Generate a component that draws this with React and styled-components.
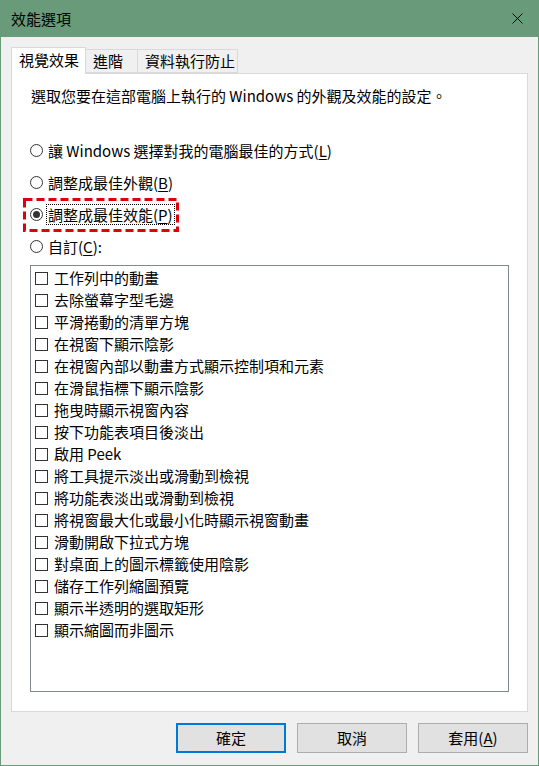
import React from 'react';
import styled, { createGlobalStyle } from 'styled-components';

const GREEN = '#699a79';
const FONT = `"Noto Sans CJK TC", "Noto Sans", sans-serif`;

const Global = createGlobalStyle`
  html, body {
    margin: 0;
    padding: 0;
    background: #ffffff;
    overflow: hidden;
  }
  * {
    box-sizing: border-box;
  }
`;

const Window = styled.div`
  width: 539px;
  height: 766px;
  display: flex;
  flex-direction: column;
  background: #f0f0f0;
  border: 1px solid ${GREEN};
  border-top: none;
  font-family: ${FONT};
  font-size: 15px;
  color: #000;
`;

const TitleBar = styled.div`
  height: 37px;
  flex: none;
  display: flex;
  align-items: center;
  justify-content: space-between;
  background: ${GREEN};
  padding: 0 15px 0 10px;
  line-height: 20px;
`;

const CloseIcon = () => (
  <svg width="11" height="11" viewBox="0 0 11 11">
    <path d="M0.5 0.5 L10.5 10.5 M10.5 0.5 L0.5 10.5" stroke="#000" strokeWidth="1" fill="none" />
  </svg>
);

const Body = styled.div`
  flex: 1;
  display: flex;
  flex-direction: column;
  padding: 10px 10px 0 10px;
`;

const TabStrip = styled.div`
  display: flex;
  align-items: flex-end;
  height: 26px;
  position: relative;
  z-index: 1;
`;

const Tab = styled.div`
  width: ${p => p.$w}px;
  height: ${p => (p.$active ? 27 : 24)}px;
  margin-bottom: ${p => (p.$active ? -1 : 0)}px;
  margin-left: ${p => (p.$first ? 0 : -1)}px;
  padding-left: 7px;
  border: 1px solid #d9d9d9;
  border-bottom: ${p => (p.$active ? 'none' : '1px solid #d9d9d9')};
  background: ${p => (p.$active ? '#ffffff' : '#f0f0f0')};
  line-height: ${p => (p.$active ? 24 : 22)}px;
  white-space: nowrap;
`;

const Panel = styled.div`
  height: 639px;
  flex: none;
  background: #ffffff;
  border: 1px solid #d9d9d9;
  padding: 12px 19px 0 19px;
  display: flex;
  flex-direction: column;
`;

const Description = styled.div`
  line-height: 20px;
  white-space: nowrap;
`;

const RadioGroup = styled.div`
  display: flex;
  flex-direction: column;
  gap: 12px;
  margin-top: 34px;
  margin-left: -1px;
`;

const RadioRow = styled.div`
  position: relative;
  display: flex;
  align-items: center;
  height: 20px;
  white-space: nowrap;
`;

const RadioCircle = styled.span`
  width: 13px;
  height: 13px;
  flex: none;
  border-radius: 50%;
  border: 1px solid #333;
  background: #fff;
  display: flex;
  align-items: center;
  justify-content: center;
  margin-right: ${p => (p.$focused ? 3 : 5)}px;

  &::after {
    content: '';
    display: ${p => (p.$checked ? 'block' : 'none')};
    width: 7px;
    height: 7px;
    border-radius: 50%;
    background: #333;
  }
`;

const RadioLabel = styled.span`
  line-height: 19px;
  padding: 0 1px;
  border: 1px dotted ${p => (p.$focused ? '#000' : 'transparent')};
  ${p => !p.$focused && 'border: none; padding: 0;'}
`;

const Highlight = styled.svg`
  position: absolute;
  left: -7px;
  top: -6px;
  overflow: visible;
  pointer-events: none;
`;

const ListBox = styled.div`
  width: 479px;
  height: 427px;
  margin-top: 9px;
  margin-left: -1px;
  border: 1px solid #828790;
  background: #fff;
  padding: 1px 0 0 4px;
`;

const CheckRow = styled.div`
  display: flex;
  align-items: center;
  height: 22px;
  line-height: 20px;
  white-space: nowrap;
`;

const CheckBox = styled.span`
  width: 13px;
  height: 13px;
  flex: none;
  border: 1px solid #333;
  background: #fff;
  margin-right: 6px;
`;

const Footer = styled.div`
  display: flex;
  justify-content: flex-end;
  gap: 11px;
  margin-top: 11px;
`;

const Button = styled.div`
  width: 110px;
  height: 30px;
  display: flex;
  align-items: center;
  justify-content: center;
  background: #e1e1e1;
  border: ${p => (p.$default ? '2px solid #0078d7' : '1px solid #adadad')};
  line-height: 20px;
`;

const Key = styled.u`
  text-underline-offset: 2px;
`;

const effects = [
  '工作列中的動畫',
  '去除螢幕字型毛邊',
  '平滑捲動的清單方塊',
  '在視窗下顯示陰影',
  '在視窗內部以動畫方式顯示控制項和元素',
  '在滑鼠指標下顯示陰影',
  '拖曳時顯示視窗內容',
  '按下功能表項目後淡出',
  '啟用 Peek',
  '將工具提示淡出或滑動到檢視',
  '將功能表淡出或滑動到檢視',
  '將視窗最大化或最小化時顯示視窗動畫',
  '滑動開啟下拉式方塊',
  '對桌面上的圖示標籤使用陰影',
  '儲存工作列縮圖預覽',
  '顯示半透明的選取矩形',
  '顯示縮圖而非圖示',
];

const App = () => (
  <>
    <Global />
    <Window>
      <TitleBar>
        <span>效能選項</span>
        <CloseIcon />
      </TitleBar>
      <Body>
        <TabStrip>
          <Tab $w={75} $active $first>視覺效果</Tab>
          <Tab $w={53}>進階</Tab>
          <Tab $w={101}>資料執行防止</Tab>
        </TabStrip>
        <Panel>
          <Description>選取您要在這部電腦上執行的 Windows 的外觀及效能的設定。</Description>
          <RadioGroup>
            <RadioRow>
              <RadioCircle />
              <RadioLabel>讓 Windows 選擇對我的電腦最佳的方式(<Key>L</Key>)</RadioLabel>
            </RadioRow>
            <RadioRow>
              <RadioCircle />
              <RadioLabel>調整成最佳外觀(<Key>B</Key>)</RadioLabel>
            </RadioRow>
            <RadioRow>
              <RadioCircle $checked $focused />
              <RadioLabel $focused>調整成最佳效能(<Key>P</Key>)</RadioLabel>
              <Highlight width="156" height="34">
                <rect
                  x="1.5"
                  y="1.5"
                  width="153"
                  height="31"
                  fill="none"
                  stroke="#e0000c"
                  strokeWidth="3"
                  strokeDasharray="8 4"
                />
              </Highlight>
            </RadioRow>
            <RadioRow>
              <RadioCircle />
              <RadioLabel>自訂(<Key>C</Key>):</RadioLabel>
            </RadioRow>
          </RadioGroup>
          <ListBox>
            {effects.map(label => (
              <CheckRow key={label}>
                <CheckBox />
                {label}
              </CheckRow>
            ))}
          </ListBox>
        </Panel>
        <Footer>
          <Button $default>確定</Button>
          <Button>取消</Button>
          <Button>套用(<Key>A</Key>)</Button>
        </Footer>
      </Body>
    </Window>
  </>
);

export default App;
